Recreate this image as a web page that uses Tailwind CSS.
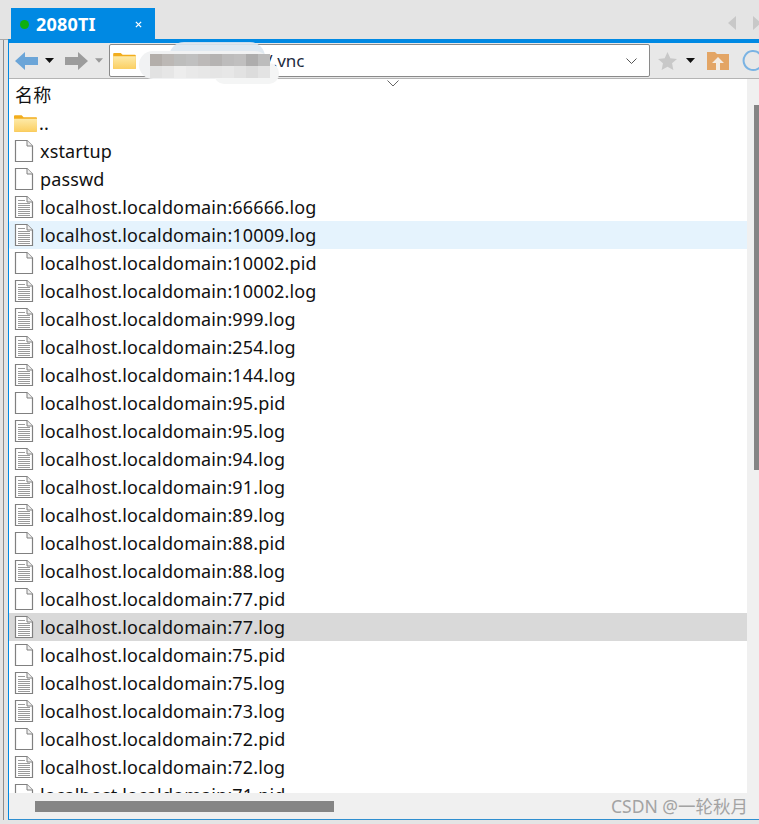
<!DOCTYPE html>
<html lang="zh">
<head>
    <meta charset="UTF-8">
    <script src="https://cdn.jsdelivr.net/npm/@tailwindcss/browser@4"></script>
    <title>2080TI</title>
</head>
<body class="bg-[#e4e4e4] w-[759px] h-[824px] overflow-hidden font-['Noto_Sans','Noto_Sans_CJK_SC',sans-serif] text-black">

    <svg class="absolute w-0 h-0">
        <defs>
            <linearGradient id="folderFill" x1="0" y1="0" x2="0" y2="1">
                <stop offset="0" stop-color="#fdeaa8"/>
                <stop offset="1" stop-color="#fbcf62"/>
            </linearGradient>
        </defs>
        <symbol id="doc" viewBox="0 0 20 24">
            <path d="M1.500 1.500H13L18.500 7V22.500H1.500Z" fill="#fff" stroke="#808080" stroke-width="1.200"/>
            <path d="M13 1.500V7H18.500" fill="#f0f0f0" stroke="#808080" stroke-width="1"/>
        </symbol>
        <symbol id="log" viewBox="0 0 20 24">
            <path d="M1.500 1.500H13L18.500 7V22.500H1.500Z" fill="#fff" stroke="#808080" stroke-width="1.200"/>
            <path d="M13 1.500V7H18.500" fill="#f0f0f0" stroke="#808080" stroke-width="1"/>
            <path d="M4 5.500H11M4 8.500H16M4 10.500H16M4 12.500H16M4 14.500H16M4 16.500H16M4 18.500H16M4 20.500H16" stroke="#9a9a9a" stroke-width="1"/>
        </symbol>
        <symbol id="folder" viewBox="0 0 24 18">
            <path d="M0 2a1 1 0 0 1 1-1h7l2 2h13a1 1 0 0 1 1 1v13a1 1 0 0 1-1 1H1a1 1 0 0 1-1-1Z" fill="#f2ad1d"/>
            <path d="M0 4.500h24V17a1 1 0 0 1-1 1H1a1 1 0 0 1-1-1Z" fill="url(#folderFill)"/>
        </symbol>
    </svg>

    <!-- tab bar -->
    <div class="flex h-[39px] pt-2 pl-[11px] justify-between overflow-hidden">
        <div class="flex items-center w-[144px] bg-[#0089e3] text-white pl-[9px] pr-[13px] pt-[2px]">
            <span class="w-[9px] h-[9px] rounded-full bg-[#0fb00f]"></span>
            <span class="ml-[7px] text-[18px] font-bold flex-1 tracking-[0.2px]">2080TI</span>
            <svg class="w-[7px] h-[7px]" viewBox="0 0 8 8"><path d="M1 1L7 7M7 1L1 7" stroke="#fff" stroke-width="1.500"/></svg>
        </div>
        <div class="flex items-center gap-[17px] -mr-[2px] pb-[1px]">
            <svg class="w-[8px] h-[14px]" viewBox="0 0 8 14"><path d="M8 0V14L0 7Z" fill="#c8c8c8"/></svg>
            <svg class="w-[8px] h-[14px]" viewBox="0 0 8 14"><path d="M0 0V14L8 7Z" fill="#c8c8c8"/></svg>
        </div>
    </div>

    <div class="flex h-[781px]">
        <!-- left panel edge -->
        <div class="w-[9px] flex-none border-t border-t-[#a8a8a8] pl-[3px]">
            <div class="w-[1px] h-full bg-[#8c8c8c]"></div>
        </div>

        <div class="flex-1 min-w-0 flex flex-col relative border-l border-[#0089e3] border-t-4 border-t-[#0089e3] -ml-[1px] border-b border-b-[#2f8fd0]">

            <!-- toolbar -->
            <div class="h-[36px] flex-none flex items-center bg-[#e8e8e8] border-b border-[#b4b4b4] pl-[6px] overflow-hidden">
                <svg class="w-[23px] h-[18px] flex-none" viewBox="0 0 23 18"><path d="M0 9L10 0V5H23V13H10V18Z" fill="#6ba5d8"/></svg>
                <svg class="w-[9px] h-[5px] ml-[7px] flex-none" viewBox="0 0 9 5"><path d="M0 0H9L4.500 5Z" fill="#111"/></svg>
                <svg class="w-[23px] h-[18px] ml-[11px] flex-none" viewBox="0 0 23 18"><path d="M23 9L13 0V5H0V13H13V18Z" fill="#9c9c9c"/></svg>
                <svg class="w-[8px] h-[5px] ml-[7px] flex-none" viewBox="0 0 9 5"><path d="M0 0H9L4.500 5Z" fill="#9a9a9a"/></svg>

                <div class="ml-[6px] w-[541px] h-[33px] flex-none flex items-center bg-white border border-[#8a8a8a] rounded-[2px] pl-[3px] pr-[12px]">
                    <svg class="w-[23px] h-[17px] flex-none"><use href="#folder"/></svg>
                    <span class="ml-[10px] text-[17px] flex-1 flex"><span>/</span><span class="ml-[114px] text-[#1d2b40]">/.vnc</span></span>
                    <svg class="w-[11px] h-[6px]" viewBox="0 0 11 6"><path d="M0.500 0.500L5.500 5.500L10.500 0.500" fill="none" stroke="#555" stroke-width="1"/></svg>
                </div>

                <svg class="w-[19px] h-[18px] ml-[8px] flex-none" viewBox="0 0 20 19"><path d="M10 0L13 6.500L20 7.300L14.800 12L16.200 19L10 15.500L3.800 19L5.200 12L0 7.300L7 6.500Z" fill="#c8c8c8"/></svg>
                <svg class="w-[9px] h-[5px] ml-[9px] flex-none" viewBox="0 0 9 5"><path d="M0 0H9L4.500 5Z" fill="#111"/></svg>
                <svg class="w-[22px] h-[19px] ml-[12px] flex-none" viewBox="0 0 22 19"><path d="M0 1H8L10 3H22V19H0Z" fill="#e3a565"/><path d="M11 6L17 12H13V19H9V12H5Z" fill="#f3ece4"/></svg>
                <svg class="w-[22px] h-[22px] ml-[13px] flex-none" viewBox="0 0 22 22"><path d="M18 4A9.500 9.500 0 1 0 20.500 12" fill="none" stroke="#7ab3e3" stroke-width="2"/></svg>
            </div>

            <!-- mosaic laid over the path -->
            <div class="absolute left-[160px] top-[-1px] w-[96px] h-[30px] rounded-[16px] bg-[#dde7ef] opacity-90"></div>
            <div class="absolute left-[130px] top-[8px] w-[130px] h-[28px] rounded-[14px] bg-[#f1f2f3]"></div>
            <div class="absolute left-[205px] top-[20px] w-[65px] h-[21px] rounded-[10px] bg-[#f4f5f5]"></div>
            <div class="absolute left-[141px] top-[11px] grid grid-cols-10 w-[120px] h-[24px]">
                <div class="bg-[#b3aeaa]"></div><div class="bg-[#bcb8b5]"></div><div class="bg-[#bdbdbc]"></div><div class="bg-[#c0c0c0]"></div><div class="bg-[#bcb9b8]"></div><div class="bg-[#b5b3b2]"></div><div class="bg-[#bdbcbc]"></div><div class="bg-[#c0bfbf]"></div><div class="bg-[#aeadad]"></div><div class="bg-[#bcbcbc]"></div>
                <div class="bg-[#e2e2e2]"></div><div class="bg-[#e6e6e6]"></div><div class="bg-[#ededed]"></div><div class="bg-[#e9e9e9]"></div><div class="bg-[#e7e7e7]"></div><div class="bg-[#e5e5e5]"></div><div class="bg-[#e7e7e7]"></div><div class="bg-[#e2e2e2]"></div><div class="bg-[#dcdcdc]"></div><div class="bg-[#e3e3e3]"></div>
            </div>

            <!-- collapse chevron -->
            <svg class="absolute left-[378px] top-[37px] w-[12px] h-[7px]" viewBox="0 0 12 7"><path d="M0.500 0.500L6 6L11.500 0.500" fill="none" stroke="#666" stroke-width="1"/></svg>

            <!-- file list -->
            <div class="flex-1 min-h-0 flex">
                <div class="flex-1 min-w-0 bg-white overflow-hidden text-[18px] leading-[28px] text-[#111] tracking-[0.14px]">
                    <div class="h-[30px] pl-[6px] pt-[1px] flex items-center">名称</div>
                    <div class="h-[28px] flex items-center pl-[5px]"><svg class="w-[23px] h-[18px] flex-none"><use href="#folder"/></svg><span class="ml-[2px]">..</span></div>
                    <div class="h-[28px] flex items-center pl-[5px]"><svg class="w-[20px] h-[24px] flex-none"><use href="#doc"/></svg><span class="ml-[6px]">xstartup</span></div>
                    <div class="h-[28px] flex items-center pl-[5px]"><svg class="w-[20px] h-[24px] flex-none"><use href="#doc"/></svg><span class="ml-[6px]">passwd</span></div>
                    <div class="h-[28px] flex items-center pl-[5px]"><svg class="w-[20px] h-[24px] flex-none"><use href="#log"/></svg><span class="ml-[6px]">localhost.localdomain:66666.log</span></div>
                    <div class="h-[28px] flex items-center pl-[5px] bg-[#e5f3fd] rounded-l-[2px]"><svg class="w-[20px] h-[24px] flex-none"><use href="#log"/></svg><span class="ml-[6px]">localhost.localdomain:10009.log</span></div>
                    <div class="h-[28px] flex items-center pl-[5px]"><svg class="w-[20px] h-[24px] flex-none"><use href="#doc"/></svg><span class="ml-[6px]">localhost.localdomain:10002.pid</span></div>
                    <div class="h-[28px] flex items-center pl-[5px]"><svg class="w-[20px] h-[24px] flex-none"><use href="#log"/></svg><span class="ml-[6px]">localhost.localdomain:10002.log</span></div>
                    <div class="h-[28px] flex items-center pl-[5px]"><svg class="w-[20px] h-[24px] flex-none"><use href="#log"/></svg><span class="ml-[6px]">localhost.localdomain:999.log</span></div>
                    <div class="h-[28px] flex items-center pl-[5px]"><svg class="w-[20px] h-[24px] flex-none"><use href="#log"/></svg><span class="ml-[6px]">localhost.localdomain:254.log</span></div>
                    <div class="h-[28px] flex items-center pl-[5px]"><svg class="w-[20px] h-[24px] flex-none"><use href="#log"/></svg><span class="ml-[6px]">localhost.localdomain:144.log</span></div>
                    <div class="h-[28px] flex items-center pl-[5px]"><svg class="w-[20px] h-[24px] flex-none"><use href="#doc"/></svg><span class="ml-[6px]">localhost.localdomain:95.pid</span></div>
                    <div class="h-[28px] flex items-center pl-[5px]"><svg class="w-[20px] h-[24px] flex-none"><use href="#log"/></svg><span class="ml-[6px]">localhost.localdomain:95.log</span></div>
                    <div class="h-[28px] flex items-center pl-[5px]"><svg class="w-[20px] h-[24px] flex-none"><use href="#log"/></svg><span class="ml-[6px]">localhost.localdomain:94.log</span></div>
                    <div class="h-[28px] flex items-center pl-[5px]"><svg class="w-[20px] h-[24px] flex-none"><use href="#log"/></svg><span class="ml-[6px]">localhost.localdomain:91.log</span></div>
                    <div class="h-[28px] flex items-center pl-[5px]"><svg class="w-[20px] h-[24px] flex-none"><use href="#log"/></svg><span class="ml-[6px]">localhost.localdomain:89.log</span></div>
                    <div class="h-[28px] flex items-center pl-[5px]"><svg class="w-[20px] h-[24px] flex-none"><use href="#doc"/></svg><span class="ml-[6px]">localhost.localdomain:88.pid</span></div>
                    <div class="h-[28px] flex items-center pl-[5px]"><svg class="w-[20px] h-[24px] flex-none"><use href="#log"/></svg><span class="ml-[6px]">localhost.localdomain:88.log</span></div>
                    <div class="h-[28px] flex items-center pl-[5px]"><svg class="w-[20px] h-[24px] flex-none"><use href="#doc"/></svg><span class="ml-[6px]">localhost.localdomain:77.pid</span></div>
                    <div class="h-[28px] flex items-center pl-[5px] bg-[#d9d9d9]"><svg class="w-[20px] h-[24px] flex-none"><use href="#log"/></svg><span class="ml-[6px]">localhost.localdomain:77.log</span></div>
                    <div class="h-[28px] flex items-center pl-[5px]"><svg class="w-[20px] h-[24px] flex-none"><use href="#doc"/></svg><span class="ml-[6px]">localhost.localdomain:75.pid</span></div>
                    <div class="h-[28px] flex items-center pl-[5px]"><svg class="w-[20px] h-[24px] flex-none"><use href="#log"/></svg><span class="ml-[6px]">localhost.localdomain:75.log</span></div>
                    <div class="h-[28px] flex items-center pl-[5px]"><svg class="w-[20px] h-[24px] flex-none"><use href="#log"/></svg><span class="ml-[6px]">localhost.localdomain:73.log</span></div>
                    <div class="h-[28px] flex items-center pl-[5px]"><svg class="w-[20px] h-[24px] flex-none"><use href="#doc"/></svg><span class="ml-[6px]">localhost.localdomain:72.pid</span></div>
                    <div class="h-[28px] flex items-center pl-[5px]"><svg class="w-[20px] h-[24px] flex-none"><use href="#log"/></svg><span class="ml-[6px]">localhost.localdomain:72.log</span></div>
                    <div class="h-[28px] flex items-center pl-[5px]"><svg class="w-[20px] h-[24px] flex-none"><use href="#doc"/></svg><span class="ml-[6px]">localhost.localdomain:71.pid</span></div>
                </div>
                <!-- vertical scrollbar -->
                <div class="w-[12px] flex-none bg-[#f0f0f0] pt-[26px] pl-[7px]">
                    <div class="w-[5px] h-[365px] bg-[#858585]"></div>
                </div>
            </div>

            <!-- horizontal scrollbar -->
            <div class="relative h-[26px] flex-none bg-[#f0f0f0] pt-[8px] pl-[26px]">
                <div class="w-[299px] h-[11px] bg-[#858585]"></div>
                <span class="absolute right-[11px] top-[1px] text-[17.5px] leading-[24px] text-[#a3a3a3]">CSDN @一轮秋月</span>
            </div>
        </div>
    </div>
</body>
</html>
